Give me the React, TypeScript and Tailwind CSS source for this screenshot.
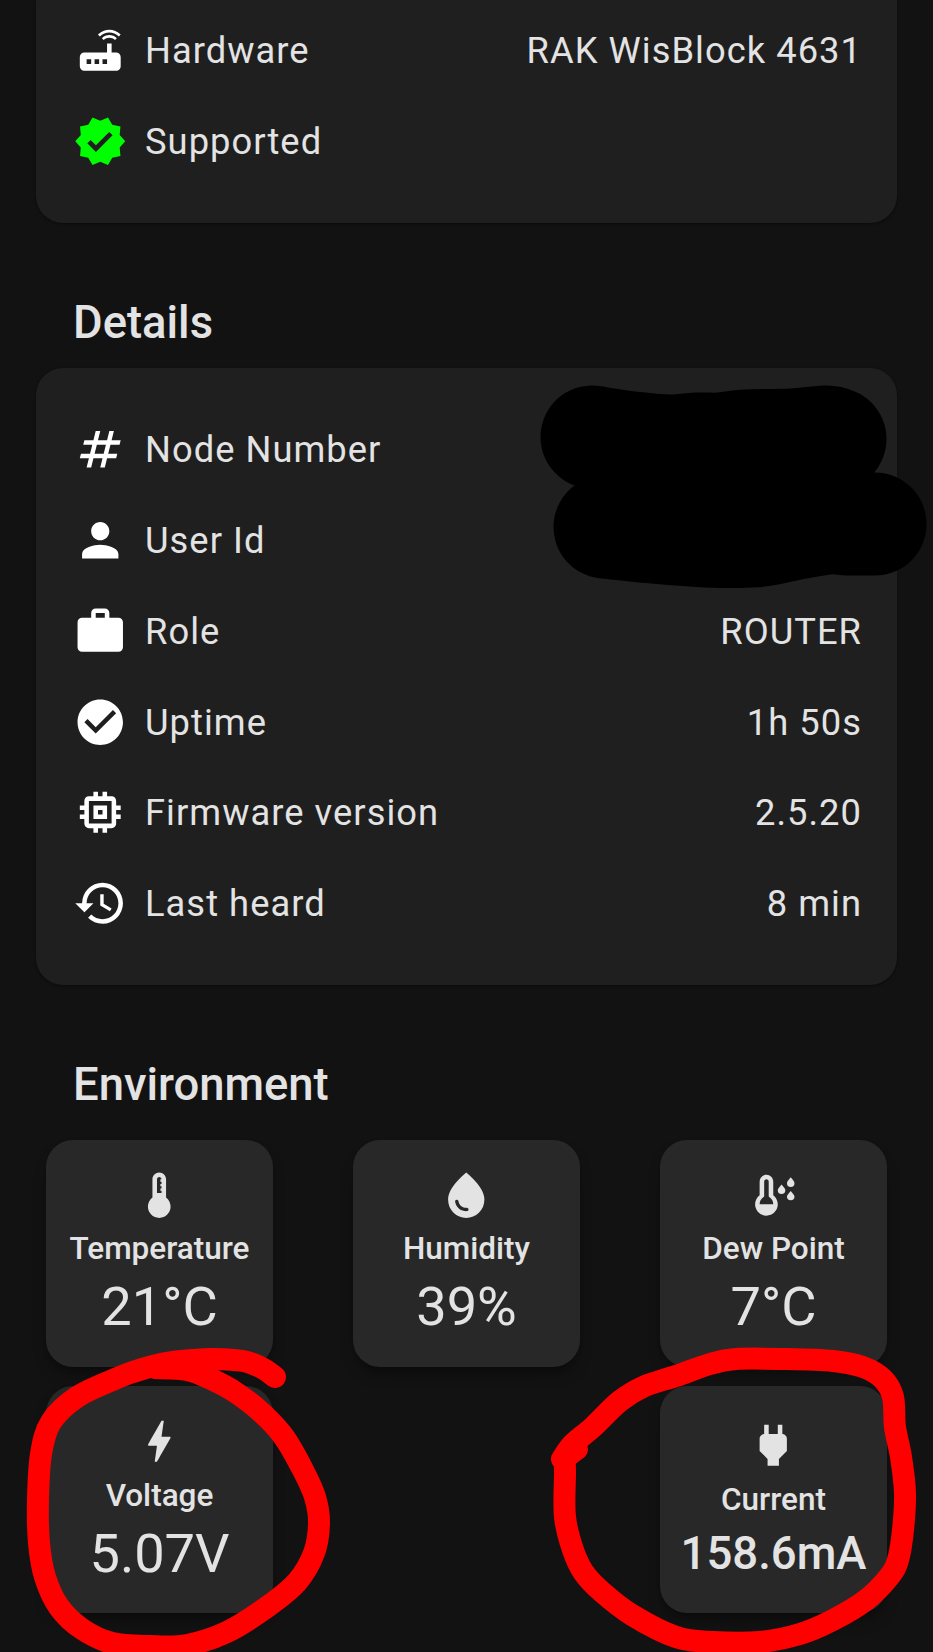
import type { ReactNode } from "react";
import type { IconType } from "react-icons";
import {
  MdBolt,
  MdCheckCircle,
  MdHistory,
  MdMemory,
  MdNumbers,
  MdPerson,
  MdPower,
  MdRouter,
  MdVerified,
  MdWaterDrop,
  MdWork
} from "react-icons/md";

type Point = [number, number];

const details: { icon: IconType; label: string; value?: string }[] = [
  { icon: MdNumbers, label: "Node Number" },
  { icon: MdPerson, label: "User Id" },
  { icon: MdWork, label: "Role", value: "ROUTER" },
  { icon: MdCheckCircle, label: "Uptime", value: "1h 50s" },
  { icon: MdMemory, label: "Firmware version", value: "2.5.20" },
  { icon: MdHistory, label: "Last heard", value: "8 min" }
];

const nodeNumberStroke: Point[] = [
  [592, 437], [632, 443], [670, 446], [697, 444], [720, 444], [747, 441], [793, 440], [825, 437], [835, 439]
];

const userIdStroke: Point[] = [
  [605, 527], [653, 532], [707, 536], [753, 536], [787, 530], [827, 523], [847, 524], [875, 524]
];

const voltageStroke: Point[] = [
  [275, 1377], [262, 1368], [243, 1361], [213, 1359], [193, 1360], [173, 1362], [153, 1366], [133, 1372],
  [115, 1379], [77, 1397], [51, 1422], [41, 1454], [38, 1500], [39, 1543], [45, 1577], [59, 1607],
  [82, 1629], [112, 1643], [150, 1646], [187, 1645], [227, 1632], [267, 1607], [297, 1582], [314, 1553],
  [319, 1523], [315, 1497], [303, 1470], [284, 1437], [262, 1413], [235, 1392], [213, 1380], [187, 1370],
  [155, 1368]
];

const currentStroke: Point[] = [
  [577, 1449], [566, 1459], [565, 1475], [565, 1517], [573, 1550], [584, 1573], [602, 1592], [632, 1615],
  [676, 1637], [713, 1642], [760, 1642], [800, 1634], [833, 1620], [866, 1600], [889, 1577], [898, 1560],
  [903, 1530], [905, 1493], [901, 1457], [895, 1427], [893, 1397], [883, 1379], [863, 1367], [833, 1361],
  [783, 1359], [736, 1359], [710, 1364], [676, 1376], [645, 1386], [620, 1401], [593, 1427], [573, 1444],
  [562, 1459]
];

// Catmull-Rom through the points, written as cubic segments
function smoothPath(points: Point[]) {
  let d = `M${points[0][0]} ${points[0][1]}`;
  for (let i = 0; i < points.length - 1; i++) {
    const p0 = points[i - 1] ?? points[i];
    const p1 = points[i];
    const p2 = points[i + 1];
    const p3 = points[i + 2] ?? p2;
    d += `C${p1[0] + (p2[0] - p0[0]) / 6} ${p1[1] + (p2[1] - p0[1]) / 6} ${p2[0] - (p3[0] - p1[0]) / 6} ${p2[1] - (p3[1] - p1[1]) / 6} ${p2[0]} ${p2[1]}`;
  }
  return d;
}

export default function App() {
  return (
    <div className="relative h-[1652px] w-[933px] overflow-hidden bg-[#121212] font-['Roboto',sans-serif] text-[#e3e3e3]">
      <section className="mx-[36px] h-[223px] rounded-b-[27px] bg-[#1f1f1f] pt-[5px] pr-[35px] pl-[37px] shadow-sm shadow-black/30">
        <InfoRow icon={MdRouter} label="Hardware" value="RAK WisBlock 4631" />
        <InfoRow icon={MdVerified} label="Supported" color="text-[#00ff00]" />
      </section>

      <SectionTitle>Details</SectionTitle>
      <section className="mx-[36px] mt-[18px] h-[617px] rounded-[27px] bg-[#1f1f1f] pt-[36px] pr-[35px] pl-[37px] shadow-sm shadow-black/30">
        {details.map((row) => (
          <InfoRow key={row.label} icon={row.icon} label={row.label} value={row.value} />
        ))}
      </section>

      <SectionTitle>Environment</SectionTitle>
      <section className="mt-[27.5px] grid grid-cols-[repeat(3,227px)] justify-between gap-y-[19.5px] px-[46px]">
        <MetricCard icon={<ThermometerIcon />} label="Temperature" value="21°C" />
        <MetricCard icon={<MdWaterDrop className="size-full" />} label="Humidity" value="39%" />
        <MetricCard icon={<DewPointIcon />} label="Dew Point" value="7°C" />
        <MetricCard icon={<MdBolt className="size-full" />} label="Voltage" value="5.07V" />
        <div className="col-start-3">
          <MetricCard icon={<MdPower className="size-full" />} label="Current" value="158.6mA" compact />
        </div>
      </section>

      <svg className="absolute inset-0 h-full w-full" viewBox="0 0 933 1652" fill="none" strokeLinecap="round" strokeLinejoin="round">
        <g stroke="#000000" strokeWidth="103">
          <path d={smoothPath(nodeNumberStroke)} />
          <path d={smoothPath(userIdStroke)} />
        </g>
        <g stroke="#ff0000" strokeWidth="22">
          <path d={smoothPath(voltageStroke)} />
          <path d={smoothPath(currentStroke)} />
        </g>
      </svg>
    </div>
  );
}

function SectionTitle({ children }: { children: ReactNode }) {
  return <h2 className="px-[73px] pt-[72px] text-[45.4px] leading-[55px] font-medium">{children}</h2>;
}

function InfoRow({
  icon: Icon,
  label,
  value,
  color = "text-white"
}: {
  icon: IconType;
  label: string;
  value?: string;
  color?: string;
}) {
  return (
    <div className="flex h-[90.8px] items-center text-[36.3px] tracking-[1.04px]">
      <Icon className={`mr-[17.5px] size-[54.5px] shrink-0 ${color}`} />
      <span className="flex-1 pt-[2px]">{label}</span>
      {value && <span className="pt-[2px]">{value}</span>}
    </div>
  );
}

function MetricCard({
  icon,
  label,
  value,
  compact = false
}: {
  icon: ReactNode;
  label: string;
  value: string;
  compact?: boolean;
}) {
  return (
    <div
      className={`flex h-[227px] w-[227px] flex-col items-center rounded-[27px] bg-[#282828] whitespace-nowrap shadow-lg shadow-black/30 ${
        compact ? "pt-[32px]" : "pt-[28px]"
      }`}
    >
      <div className="size-[54.5px] shrink-0">{icon}</div>
      <div className="mt-[4px] text-[31.5px] leading-[45.4px] font-medium">{label}</div>
      <div className={compact ? "text-[45.5px] leading-[63.6px] font-medium" : "text-[54.2px] leading-[72px]"}>{value}</div>
    </div>
  );
}

function ThermometerIcon() {
  return (
    <svg viewBox="0 0 24 24" fill="currentColor" className="size-full">
      <path d="M15 13V5c0-1.66-1.34-3-3-3S9 3.34 9 5v8c-1.21.91-2 2.37-2 4 0 2.76 2.24 5 5 5s5-2.24 5-5c0-1.63-.79-3.09-2-4zm-4-8c0-.55.45-1 1-1s1 .45 1 1h-.5v1h.5v1h-.5v1h.5v1h-.5v1h.5v1h-2V5z" />
    </svg>
  );
}

function DewPointIcon() {
  return (
    <svg viewBox="0 0 24 24" fill="currentColor" className="size-full">
      <path
        fillRule="evenodd"
        d="M12 12V6c0-1.66-1.34-3-3-3S6 4.34 6 6v6c-1.21.91-2 2.37-2 4 0 2.76 2.24 5 5 5s5-2.24 5-5c0-1.63-.79-3.09-2-4zM6 16c0-1.23.56-2.35 1.6-3.08L8 12.6V6c0-.55.45-1 1-1s1 .45 1 1v6.6l.4.32C11.44 13.65 12 14.77 12 16z"
      />
      <path d="M19.7 4.1c-1.1 1.25-1.65 1.9-1.65 2.6a1.65 1.65 0 0 0 3.3 0c0-.7-.55-1.35-1.65-2.6zM15.65 7.3C14.55 8.55 14 9.2 14 9.8a1.65 1.65 0 0 0 3.3 0c0-.6-.55-1.25-1.65-2.5zM19.7 10.1c-1.1 1.25-1.65 1.9-1.65 2.5a1.65 1.65 0 0 0 3.3 0c0-.6-.55-1.25-1.65-2.5z" />
    </svg>
  );
}
